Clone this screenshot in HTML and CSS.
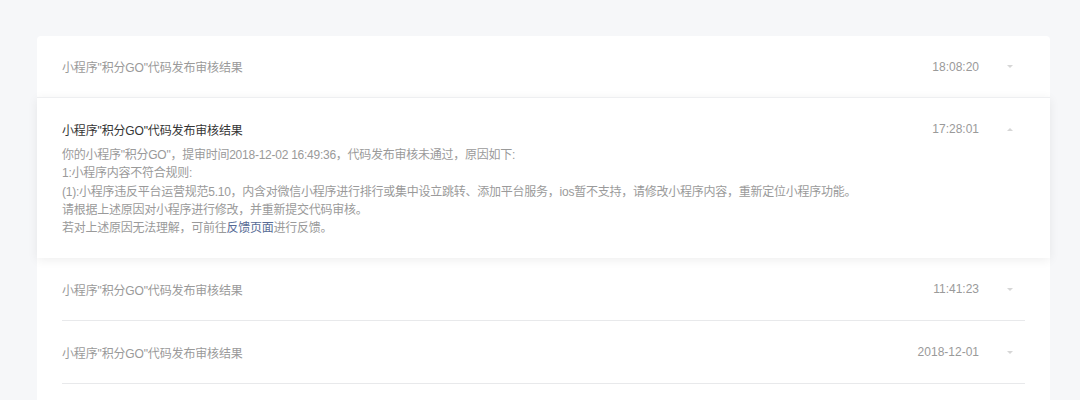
FILE: index.html
```html
<!DOCTYPE html>
<html lang="zh-CN">
<head>
<meta charset="utf-8">
<link rel="stylesheet" href="styles.css">
</head>
<body>
<div class="page">
  <div class="card">
    <div class="item">
      <div class="row">
        <div class="title">小程序"积分GO"代码发布审核结果</div>
        <div class="time">18:08:20</div>
        <span class="caret down"></span>
      </div>
    </div>
    <div class="item open">
      <div class="row head">
        <div class="title">小程序"积分GO"代码发布审核结果</div>
        <div class="time">17:28:01</div>
        <span class="caret up"></span>
      </div>
      <div class="body">
        <p>你的小程序"积分GO"，提审时间2018-12-02 16:49:36，代码发布审核未通过，原因如下:</p>
        <p>1:小程序内容不符合规则:</p>
        <p>(1):小程序违反平台运营规范5.10，内含对微信小程序进行排行或集中设立跳转、添加平台服务，ios暂不支持，请修改小程序内容，重新定位小程序功能。</p>
        <p>请根据上述原因对小程序进行修改，并重新提交代码审核。</p>
        <p>若对上述原因无法理解，可前往<a class="link" href="#">反馈页面</a>进行反馈。</p>
      </div>
    </div>
    <div class="item">
      <div class="row line">
        <div class="title">小程序"积分GO"代码发布审核结果</div>
        <div class="time">11:41:23</div>
        <span class="caret down"></span>
      </div>
    </div>
    <div class="item">
      <div class="row line">
        <div class="title">小程序"积分GO"代码发布审核结果</div>
        <div class="time">2018-12-01</div>
        <span class="caret down"></span>
      </div>
    </div>
  </div>
</div>
</body>
</html>
```
FILE: styles.css
```css
html, body {
  margin: 0;
  padding: 0;
  background: #f6f7f9;
  font-family: "Liberation Sans", "Noto Sans CJK SC", sans-serif;
  font-size: 12px;
  color: #999;
}
.page {
  padding: 36px 30px 0 37px;
}
.card {
  width: 1013px;
  background: #fff;
  border-radius: 4px 4px 0 0;
  height: 380px;
}
.item {
  padding: 0 25px;
}
.row {
  height: 61px;
  display: flex;
  align-items: center;
}
.row.line {
  height: 62px;
  border-bottom: 1px solid #e8e9eb;
}
.title {
  flex: 1;
  color: #9a9a9a;
  letter-spacing: -0.15px;
}
.time {
  color: #9a9a9a;
}
.caret {
  width: 0;
  height: 0;
  margin-left: 28px;
  margin-right: 12px;
  border-left: 3px solid transparent;
  border-right: 3px solid transparent;
}
.caret.down {
  border-top: 3px solid #d6d6d6;
}
.caret.up {
  border-bottom: 3px solid #d6d6d6;
}
.item.open {
  border-top: 1px solid #eeeff1;
  box-shadow: 0 2px 10px rgba(0, 0, 0, 0.07);
  padding-top: 22px;
  padding-bottom: 21px;
  position: relative;
}
.row.head {
  height: 18px;
}
.row.head .title {
  color: #353535;
}
.body {
  margin-top: 8px;
  line-height: 18.3px;
  color: #9a9a9a;
  letter-spacing: -0.25px;
}
.body p {
  margin: 0;
}
.link {
  color: #576b95;
  text-decoration: none;
}
```
